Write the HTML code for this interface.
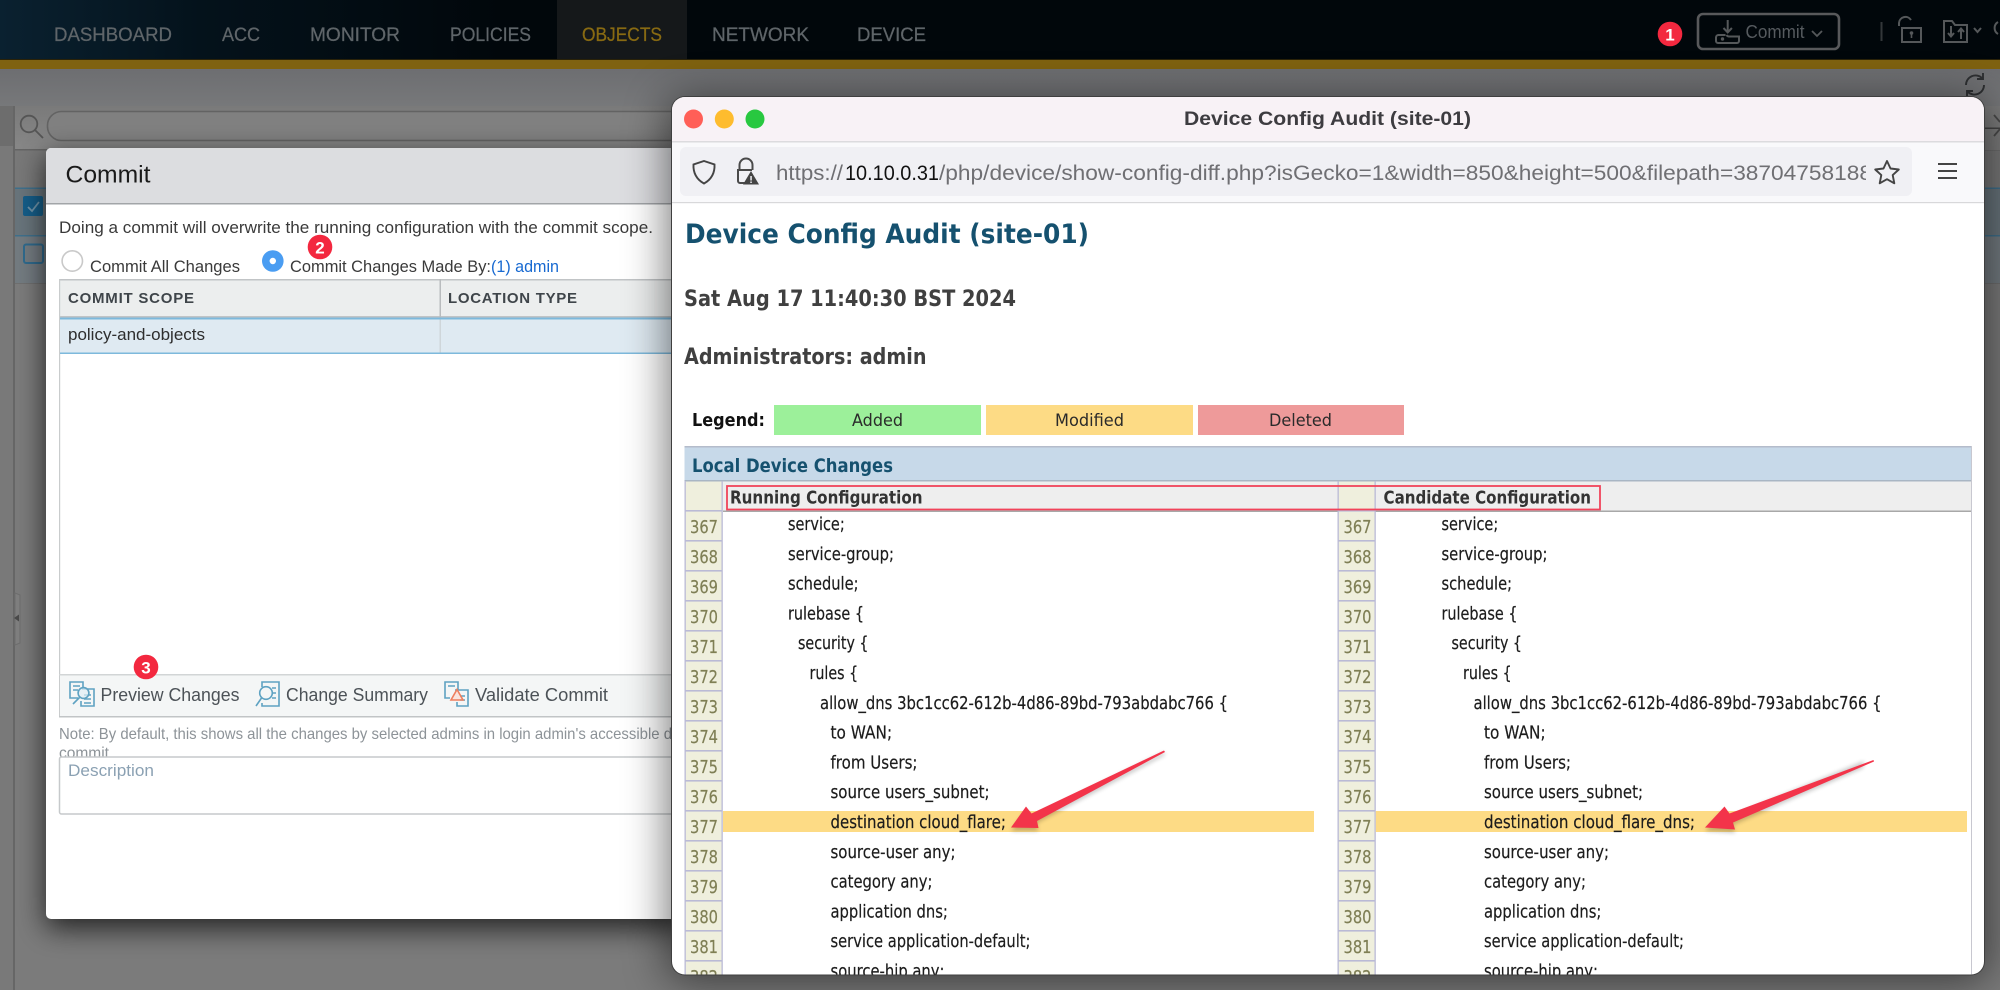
<!DOCTYPE html>
<html><head><meta charset="utf-8"><title>Device Config Audit</title>
<style>
html,body{margin:0;padding:0;background:#7a7a7a;width:2000px;height:990px;overflow:hidden}
svg{display:block;position:absolute;left:0;top:0}
text{font-family:"Liberation Sans",sans-serif;white-space:pre}
.d{font-family:"DejaVu Sans","Liberation Sans",sans-serif}
.c{font-family:"DejaVu Sans","Liberation Sans",sans-serif;font-size:17.5px;fill:#1c1c1c;stroke:#1c1c1c;stroke-width:.2px}
.n{font-family:"DejaVu Sans","Liberation Sans",sans-serif;font-size:18px;fill:#7f7f55;stroke:#7f7f55;stroke-width:.2px}
.nav{font-size:19.5px;fill:#5f6569;stroke:#5f6569;stroke-width:.25px}
.ic{fill:none;stroke:#5ea2c2;stroke-width:1.6}
.tk{fill:none;stroke:#55585a;stroke-width:2}
</style></head><body>
<svg width="2000" height="990" viewBox="0 0 2000 990" xmlns="http://www.w3.org/2000/svg">
<defs>
<linearGradient id="nv" x1="0" x2="1" y1="0" y2="0"><stop offset="0" stop-color="#0a2130"/><stop offset=".1" stop-color="#04121b"/><stop offset=".25" stop-color="#01070b"/><stop offset="1" stop-color="#01070b"/></linearGradient>
<linearGradient id="bd" x1="0" x2="0" y1="0" y2="1"><stop offset="0" stop-color="#6d6e71"/><stop offset="1" stop-color="#77787a"/></linearGradient>
<linearGradient id="sr" x1="0" x2="0" y1="0" y2="1"><stop offset="0" stop-color="#7a7a7a"/><stop offset="1" stop-color="#878787"/></linearGradient>
<filter id="b1" x="-20%" y="-20%" width="140%" height="140%"><feGaussianBlur stdDeviation="14"/></filter>
<filter id="b2" x="-20%" y="-20%" width="140%" height="140%"><feGaussianBlur stdDeviation="22"/></filter>
<filter id="b3" x="-20%" y="-60%" width="140%" height="220%"><feGaussianBlur stdDeviation="2"/></filter>
<pattern id="nc" x="0" y="510" width="10" height="30" patternUnits="userSpaceOnUse"><rect width="10" height="30" fill="#efefdd"/><rect width="10" height="1.6" fill="#babad6"/></pattern>
<clipPath id="win"><rect x="672" y="97" width="1312" height="877.5" rx="13"/></clipPath>
<clipPath id="url"><rect x="770" y="150" width="1096" height="44"/></clipPath>
<clipPath id="cmt"><rect x="50" y="740" width="100" height="17"/></clipPath>
</defs>

<!-- background app -->
<rect width="2000" height="990" fill="#7b7b7b"/>
<rect width="2000" height="60" fill="url(#nv)"/>
<rect x="557" y="0" width="130" height="59" fill="#15181a"/>
<rect y="59" width="2000" height="1" fill="#2a2208"/>
<rect y="60" width="2000" height="9" fill="#7f6210"/>
<rect y="69" width="2000" height="37" fill="url(#bd)"/>
<text class="nav" x="54" y="41" textLength="118" lengthAdjust="spacingAndGlyphs">DASHBOARD</text>
<text class="nav" x="222" y="41" textLength="38" lengthAdjust="spacingAndGlyphs">ACC</text>
<text class="nav" x="310" y="41" textLength="90" lengthAdjust="spacingAndGlyphs">MONITOR</text>
<text class="nav" x="450" y="41" textLength="81" lengthAdjust="spacingAndGlyphs">POLICIES</text>
<text class="nav" x="582" y="41" textLength="80" lengthAdjust="spacingAndGlyphs" style="fill:#886a12;stroke:#886a12">OBJECTS</text>
<text class="nav" x="712" y="41" textLength="97" lengthAdjust="spacingAndGlyphs">NETWORK</text>
<text class="nav" x="857" y="41" textLength="69" lengthAdjust="spacingAndGlyphs">DEVICE</text>

<!-- commit button & header icons -->
<circle cx="1670" cy="34" r="12.3" fill="#f3283f"/>
<text x="1670" y="40.5" text-anchor="middle" font-size="17" font-weight="700" fill="#fff">1</text>
<rect x="1698" y="14" width="141" height="35" rx="5" fill="none" stroke="#58595b" stroke-width="2.6"/>
<path class="tk" d="M1727.7 20V32M1723.5 28l4.2 4.4 4.2-4.4"/>
<path class="tk" d="M1718.5 35h7M1718.5 35a2.5 2.5 0 0 0-2.5 2.5v3.5a2 2 0 0 0 2 2h19a2 2 0 0 0 2-2v-4.5h-9.5a3 3 0 0 1-3-1.500"/>
<circle cx="1722.5" cy="39" r="1.7" fill="#55585a"/>
<text x="1745.5" y="38" font-size="18" fill="#565b5f" textLength="59" lengthAdjust="spacingAndGlyphs">Commit</text>
<path d="M1812 31l5 5 5-5" fill="none" stroke="#55585a" stroke-width="1.8"/>
<rect x="1880.5" y="22" width="2" height="19" fill="#33373a"/>
<path class="tk" d="M1902 28h19v14h-19zM1899 26v-3a6.5 6.5 0 0 1 12-3"/>
<circle cx="1911.5" cy="33" r="1.8" fill="#55585a"/><rect x="1910.7" y="33" width="1.6" height="5" fill="#55585a"/>
<path class="tk" d="M1944 21h8l3 4h12v17h-23zM1951 26v10M1948 33l3 3.5 3-3.5M1961 39V29M1958 32l3-3.5 3 3.5"/>
<path d="M1974 28l3.5 4 3.5-4" fill="none" stroke="#55585a" stroke-width="2"/>
<path d="M1998 22a7 7 0 0 0 0 12" fill="none" stroke="#55585a" stroke-width="2"/>
<path d="M1966 85a9.5 9.5 0 0 1 16-7M1984 85a9.5 9.5 0 0 1-16 7M1983 73v6h-6M1967 97v-6h6" fill="none" stroke="#2e3032" stroke-width="1.9"/>

<!-- grid background -->
<rect x="0" y="106" width="2000" height="44" fill="url(#sr)"/>
<rect x="0" y="106" width="13" height="40" fill="#6d6d6d"/>
<rect x="0" y="146" width="13" height="844" fill="#797979"/>
<rect x="13" y="106" width="2" height="884" fill="#666"/>
<circle cx="29" cy="124" r="8.3" fill="none" stroke="#555" stroke-width="1.8"/>
<path d="M35 130l8 8" stroke="#555" stroke-width="1.8"/>
<rect x="47.5" y="111.5" width="2000" height="29" rx="14" fill="#808080" stroke="#636363" stroke-width="1.6"/>
<rect x="15" y="150" width="1985" height="38" fill="#787878"/>
<rect x="15" y="149" width="1985" height="1.5" fill="#646464"/>
<rect x="15" y="188" width="1985" height="47" fill="#68747b"/>
<rect x="15" y="235" width="1985" height="48" fill="#737b80"/>
<rect x="15" y="187.5" width="1985" height="1.5" fill="#3f708c"/>
<rect x="15" y="235" width="1985" height="1.5" fill="#3f708c"/>
<rect x="15" y="283" width="1985" height="1" fill="#6f6f6f"/>
<rect x="23" y="196" width="20" height="20" rx="2" fill="#155d88"/>
<path d="M28 207l4 4 7-9" fill="none" stroke="#6f93a8" stroke-width="1.8"/>
<rect x="24" y="244.5" width="19" height="18.5" rx="2" fill="none" stroke="#2f6a8d" stroke-width="2"/>
<path d="M15 593l5 2v48l-5 2z" fill="#7f7f7f" stroke="#6e6e6e"/>
<path d="M14 618l5-3.5v7z" fill="#4a4a4a"/>
<rect x="1984" y="106" width="16" height="44" fill="#7c7c7c"/>
<path d="M1994 115l6 7M1994 136l6-7" stroke="#4a4a4a" stroke-width="1.8"/>
<rect x="1984" y="127.5" width="16" height="1.5" fill="#444"/>

<!-- dialog shadow -->
<rect x="46" y="156" width="640" height="772" rx="5" fill="#000" opacity=".72" filter="url(#b1)"/>

<!-- commit dialog -->
<rect x="46" y="148" width="660" height="771" rx="5" fill="#fff"/>
<path d="M46 203v-50a5 5 0 0 1 5-5h655v55z" fill="#dcdde0"/>
<rect x="46" y="203" width="660" height="1.5" fill="#a2a5a8"/>
<text x="65.5" y="182.5" font-size="24.5" fill="#1a1a1a" textLength="85" lengthAdjust="spacingAndGlyphs">Commit</text>
<text x="59" y="233" font-size="17" fill="#3a3a3a" textLength="594" lengthAdjust="spacingAndGlyphs">Doing a commit will overwrite the running configuration with the commit scope.</text>
<circle cx="72.3" cy="261" r="10.2" fill="#fff" stroke="#c9c9c9" stroke-width="1.6"/>
<text x="90" y="272" font-size="17" fill="#3a3a3a" textLength="150" lengthAdjust="spacingAndGlyphs">Commit All Changes</text>
<circle cx="272.8" cy="261" r="10.8" fill="#4a9df2"/><circle cx="272.8" cy="261" r="3.2" fill="#fff"/>
<text x="290" y="272" font-size="17" fill="#3a3a3a" textLength="201" lengthAdjust="spacingAndGlyphs">Commit Changes Made By:</text>
<text x="491" y="272" font-size="17" fill="#1769d1" textLength="68" lengthAdjust="spacingAndGlyphs">(1) admin</text>
<circle cx="320" cy="247" r="12.3" fill="#f3283f"/>
<text x="320" y="253.5" text-anchor="middle" font-size="17" font-weight="700" fill="#fff">2</text>

<rect x="59" y="279" width="640" height="38" fill="#eceeee"/>
<rect x="59" y="279" width="640" height="1.5" fill="#c1c4c6"/>
<rect x="59" y="316" width="640" height="1.5" fill="#c1c4c6"/>
<rect x="439.5" y="279" width="1.5" height="74" fill="#b9bcbe"/>
<rect x="59" y="279" width="1.2" height="438" fill="#c9cccd"/>
<text x="68" y="303" font-size="15" font-weight="700" fill="#3f454a" textLength="126" lengthAdjust="spacing">COMMIT SCOPE</text>
<text x="448" y="303" font-size="15" font-weight="700" fill="#3f454a" textLength="129" lengthAdjust="spacing">LOCATION TYPE</text>
<rect x="60" y="318" width="640" height="35" fill="#dfeaf2"/>
<rect x="439.5" y="318" width="1.5" height="35" fill="#cfd6da"/>
<rect x="60" y="317.5" width="640" height="2" fill="#7db9dc"/>
<rect x="60" y="352.5" width="640" height="1.5" fill="#7db9dc"/>
<text x="68" y="340" font-size="16.5" fill="#2e2e2e" textLength="137" lengthAdjust="spacingAndGlyphs">policy-and-objects</text>

<rect x="60" y="674" width="640" height="43" fill="#f4f6f6"/>
<rect x="59" y="674" width="640" height="1.5" fill="#d2d5d6"/>
<rect x="59" y="716" width="640" height="1.5" fill="#c1c4c6"/>
<path class="ic" d="M83 689v-7H70v16h8M82 689h12v17H81v-5M84 695h7M84 699h7M84 703h7M73 686h7M73 690h5"/>
<circle cx="83.5" cy="693" r="5.4" fill="#dfeef5" fill-opacity=".7" stroke="#5ea2c2" stroke-width="1.6"/>
<path class="ic" d="M79.5 697.5L73 704"/>
<path class="ic" d="M262 687v-5h17v24h-17v-3M272 688h4M272 693h4M272 698h4"/>
<circle cx="266" cy="693" r="6.3" fill="none" stroke="#5ea2c2" stroke-width="1.6"/>
<path class="ic" d="M261.5 698L256 706"/>
<path class="ic" d="M458 690v-8h-13v16h5M455 690h13v16h-11v-4M460 696h5M460 700h5M448 686h7"/>
<path d="M457 689.5l6 10.5h-12z" fill="#fbd9cd" fill-opacity=".6" stroke="#ee7f5e" stroke-width="1.6"/>
<text x="100.5" y="701" font-size="18" fill="#4c5257" textLength="139" lengthAdjust="spacingAndGlyphs">Preview Changes</text>
<text x="286" y="701" font-size="18" fill="#4c5257" textLength="142" lengthAdjust="spacingAndGlyphs">Change Summary</text>
<text x="475" y="701" font-size="18" fill="#4c5257" textLength="133" lengthAdjust="spacingAndGlyphs">Validate Commit</text>
<circle cx="146" cy="667" r="12.3" fill="#f3283f"/>
<text x="146" y="673.5" text-anchor="middle" font-size="17" font-weight="700" fill="#fff">3</text>

<text x="59" y="739" font-size="16" fill="#8d9398" textLength="613" lengthAdjust="spacingAndGlyphs">Note: By default, this shows all the changes by selected admins in login admin's accessible d</text>
<text x="59" y="758" font-size="16" fill="#8d9398" textLength="50" lengthAdjust="spacingAndGlyphs" clip-path="url(#cmt)">commit</text>
<rect x="59.5" y="757" width="640" height="57" rx="2" fill="#fff" stroke="#c6c9cb" stroke-width="1.5"/>
<text x="68" y="776" font-size="17" fill="#8ba1b3" textLength="86" lengthAdjust="spacingAndGlyphs">Description</text>

<!-- browser shadow -->
<rect x="668" y="100" width="1320" height="880" rx="14" fill="#000" opacity=".55" filter="url(#b2)"/>

<!-- browser window -->
<rect x="671" y="96" width="1314" height="879.5" rx="14" fill="#3f3f3f"/>
<g clip-path="url(#win)">
<rect x="672" y="97" width="1312" height="878" fill="#fff"/>
<rect x="672" y="97" width="1312" height="44" fill="#f8f2f6"/>
<rect x="672" y="141" width="1312" height="1.5" fill="#dcdbde"/>
<rect x="672" y="142.5" width="1312" height="60" fill="#f9f9fb"/>
<rect x="672" y="202" width="1312" height="1.2" fill="#d8d8da"/>
<circle cx="693.5" cy="119" r="9.5" fill="#ff5f57"/>
<circle cx="724.3" cy="119" r="9.5" fill="#febc2e"/>
<circle cx="755" cy="119" r="9.5" fill="#28c840"/>
<text x="1184" y="125" font-size="19" font-weight="700" fill="#3d3c40" textLength="287" lengthAdjust="spacingAndGlyphs">Device Config Audit (site-01)</text>
<rect x="680" y="147" width="1232" height="49" rx="6" fill="#f0f0f4"/>
<path d="M704 161l10.5 3.5c.5 8-3 15-10.5 19-7.500-4-11-11-10.500-19z" fill="none" stroke="#444" stroke-width="1.9"/>
<path d="M739.5 170v-5a6.5 6.5 0 0 1 13 0v5M744 170h-6v11a2 2 0 0 0 2 2h5" fill="none" stroke="#4a4a4a" stroke-width="2"/>
<path d="M738 170h14" stroke="#4a4a4a" stroke-width="2"/>
<path d="M751 171l8 13.5h-16z" fill="#444"/>
<rect x="750.3" y="176" width="1.5" height="4.5" fill="#f0f0f4"/><rect x="750.3" y="181.5" width="1.5" height="1.5" fill="#f0f0f4"/>
<text x="776" y="180" font-size="21" fill="#6f6f73" textLength="67" lengthAdjust="spacingAndGlyphs">https://</text>
<text x="845" y="180" font-size="21" fill="#111" textLength="94" lengthAdjust="spacingAndGlyphs">10.10.0.31</text>
<text x="939" y="180" font-size="21" fill="#6f6f73" textLength="933" lengthAdjust="spacingAndGlyphs" clip-path="url(#url)">/php/device/show-config-diff.php?isGecko=1&amp;width=850&amp;height=500&amp;filepath=38704758188</text>
<path d="M1887 161l3.5 7.5 8.3 1-6.1 5.6 1.6 8.2-7.3-4.1-7.3 4.1 1.6-8.2-6.1-5.6 8.3-1z" fill="none" stroke="#444" stroke-width="1.9" stroke-linejoin="round"/>
<path d="M1938 164h19M1938 171h19M1938 178h19" stroke="#444" stroke-width="2"/>

<text class="d" x="685" y="243" font-size="27" font-weight="700" fill="#15516f" textLength="404" lengthAdjust="spacingAndGlyphs">Device Config Audit (site-01)</text>
<text class="d" x="684" y="306" font-size="22" font-weight="700" fill="#404040" textLength="332" lengthAdjust="spacingAndGlyphs">Sat Aug 17 11:40:30 BST 2024</text>
<text class="d" x="684" y="364" font-size="22" font-weight="700" fill="#404040" textLength="242.5" lengthAdjust="spacingAndGlyphs">Administrators: admin</text>
<text class="d" x="692" y="426" font-size="17.5" font-weight="700" fill="#111" textLength="73" lengthAdjust="spacingAndGlyphs">Legend:</text>
<rect x="774" y="405" width="207" height="30" fill="#9cf09a"/>
<rect x="986" y="405" width="207" height="30" fill="#fddb85"/>
<rect x="1198" y="405" width="206" height="30" fill="#ee9a9a"/>
<text class="d" x="852" y="426" font-size="17" fill="#2a2a2a" textLength="51" lengthAdjust="spacingAndGlyphs">Added</text>
<text class="d" x="1055" y="426" font-size="17" fill="#2a2a2a" textLength="69" lengthAdjust="spacingAndGlyphs">Modified</text>
<text class="d" x="1269" y="426" font-size="17" fill="#2a2a2a" textLength="63" lengthAdjust="spacingAndGlyphs">Deleted</text>

<!-- diff table -->
<rect x="684.5" y="446" width="1287" height="35" fill="#c7d9e9"/>
<rect x="684.5" y="446" width="1287" height="1.5" fill="#b4bccb"/>
<rect x="684.5" y="481" width="1287" height="30" fill="#eeeeee"/>
<rect x="684.5" y="480" width="1287" height="1.5" fill="#a9b6c4"/>
<rect x="723" y="510.5" width="1248.5" height="1.5" fill="#a8a8a8"/>
<rect x="1971" y="446" width="1" height="530" fill="#c8c8d0"/>
<text class="d" x="692" y="472" font-size="19" font-weight="700" fill="#15516f" textLength="201" lengthAdjust="spacingAndGlyphs">Local Device Changes</text>

<rect x="685" y="481.5" width="37" height="29" fill="#efefdd"/>
<rect x="1338" y="481.5" width="37" height="29" fill="#efefdd"/>
<rect x="685" y="510" width="37" height="470" fill="url(#nc)"/>
<rect x="1338" y="510" width="37" height="470" fill="url(#nc)"/>
<rect x="684.5" y="481" width="1.3" height="500" fill="#babad6"/>
<rect x="721.5" y="481" width="1.3" height="500" fill="#babad6"/>
<rect x="1337.5" y="481" width="1.3" height="500" fill="#babad6"/>
<rect x="1374.5" y="481" width="1.3" height="500" fill="#babad6"/>

<text class="d" x="730" y="503.5" font-size="17.5" font-weight="700" fill="#333" textLength="192.5" lengthAdjust="spacingAndGlyphs">Running Configuration</text>
<text class="d" x="1383.5" y="503.5" font-size="17.5" font-weight="700" fill="#333" textLength="207.5" lengthAdjust="spacingAndGlyphs">Candidate Configuration</text>
<rect x="727" y="486" width="873" height="23.5" fill="none" stroke="#f1435a" stroke-width="1.8"/>

<rect x="723" y="811" width="591" height="21" fill="#fddb85"/>
<rect x="1375.8" y="811" width="591.2" height="21" fill="#fddb85"/>

<text class="n" x="690" y="533" textLength="28" lengthAdjust="spacingAndGlyphs">367</text><text class="n" x="1343.5" y="533" textLength="28" lengthAdjust="spacingAndGlyphs">367</text>
<text class="n" x="690" y="563" textLength="28" lengthAdjust="spacingAndGlyphs">368</text><text class="n" x="1343.5" y="563" textLength="28" lengthAdjust="spacingAndGlyphs">368</text>
<text class="n" x="690" y="593" textLength="28" lengthAdjust="spacingAndGlyphs">369</text><text class="n" x="1343.5" y="593" textLength="28" lengthAdjust="spacingAndGlyphs">369</text>
<text class="n" x="690" y="623" textLength="28" lengthAdjust="spacingAndGlyphs">370</text><text class="n" x="1343.5" y="623" textLength="28" lengthAdjust="spacingAndGlyphs">370</text>
<text class="n" x="690" y="653" textLength="28" lengthAdjust="spacingAndGlyphs">371</text><text class="n" x="1343.5" y="653" textLength="28" lengthAdjust="spacingAndGlyphs">371</text>
<text class="n" x="690" y="683" textLength="28" lengthAdjust="spacingAndGlyphs">372</text><text class="n" x="1343.5" y="683" textLength="28" lengthAdjust="spacingAndGlyphs">372</text>
<text class="n" x="690" y="713" textLength="28" lengthAdjust="spacingAndGlyphs">373</text><text class="n" x="1343.5" y="713" textLength="28" lengthAdjust="spacingAndGlyphs">373</text>
<text class="n" x="690" y="743" textLength="28" lengthAdjust="spacingAndGlyphs">374</text><text class="n" x="1343.5" y="743" textLength="28" lengthAdjust="spacingAndGlyphs">374</text>
<text class="n" x="690" y="773" textLength="28" lengthAdjust="spacingAndGlyphs">375</text><text class="n" x="1343.5" y="773" textLength="28" lengthAdjust="spacingAndGlyphs">375</text>
<text class="n" x="690" y="803" textLength="28" lengthAdjust="spacingAndGlyphs">376</text><text class="n" x="1343.5" y="803" textLength="28" lengthAdjust="spacingAndGlyphs">376</text>
<text class="n" x="690" y="833" textLength="28" lengthAdjust="spacingAndGlyphs">377</text><text class="n" x="1343.5" y="833" textLength="28" lengthAdjust="spacingAndGlyphs">377</text>
<text class="n" x="690" y="863" textLength="28" lengthAdjust="spacingAndGlyphs">378</text><text class="n" x="1343.5" y="863" textLength="28" lengthAdjust="spacingAndGlyphs">378</text>
<text class="n" x="690" y="893" textLength="28" lengthAdjust="spacingAndGlyphs">379</text><text class="n" x="1343.5" y="893" textLength="28" lengthAdjust="spacingAndGlyphs">379</text>
<text class="n" x="690" y="923" textLength="28" lengthAdjust="spacingAndGlyphs">380</text><text class="n" x="1343.5" y="923" textLength="28" lengthAdjust="spacingAndGlyphs">380</text>
<text class="n" x="690" y="953" textLength="28" lengthAdjust="spacingAndGlyphs">381</text><text class="n" x="1343.5" y="953" textLength="28" lengthAdjust="spacingAndGlyphs">381</text>
<text class="n" x="690" y="983" textLength="28" lengthAdjust="spacingAndGlyphs">382</text><text class="n" x="1343.5" y="983" textLength="28" lengthAdjust="spacingAndGlyphs">382</text>

<text class="c" x="788" y="530" textLength="56.7" lengthAdjust="spacingAndGlyphs">service;</text>
<text class="c" x="788" y="559.8" textLength="106" lengthAdjust="spacingAndGlyphs">service-group;</text>
<text class="c" x="788" y="589.6" textLength="70.5" lengthAdjust="spacingAndGlyphs">schedule;</text>
<text class="c" x="788" y="619.4" textLength="76" lengthAdjust="spacingAndGlyphs">rulebase {</text>
<text class="c" x="798" y="649.2" textLength="70.5" lengthAdjust="spacingAndGlyphs">security {</text>
<text class="c" x="809.5" y="679" textLength="48.7" lengthAdjust="spacingAndGlyphs">rules {</text>
<text class="c" x="820" y="708.8" textLength="408" lengthAdjust="spacingAndGlyphs">allow_dns 3bc1cc62-612b-4d86-89bd-793abdabc766 {</text>
<text class="c" x="830.5" y="738.6" textLength="61.6" lengthAdjust="spacingAndGlyphs">to WAN;</text>
<text class="c" x="830.5" y="768.4" textLength="87" lengthAdjust="spacingAndGlyphs">from Users;</text>
<text class="c" x="830.5" y="798.2" textLength="159" lengthAdjust="spacingAndGlyphs">source users_subnet;</text>
<text class="c" x="830.5" y="828" textLength="175.4" lengthAdjust="spacingAndGlyphs">destination cloud_flare;</text>
<text class="c" x="830.5" y="857.8" textLength="125" lengthAdjust="spacingAndGlyphs">source-user any;</text>
<text class="c" x="830.5" y="887.6" textLength="102" lengthAdjust="spacingAndGlyphs">category any;</text>
<text class="c" x="830.5" y="917.4" textLength="117.4" lengthAdjust="spacingAndGlyphs">application dns;</text>
<text class="c" x="830.5" y="947.2" textLength="200" lengthAdjust="spacingAndGlyphs">service application-default;</text>
<text class="c" x="830.5" y="977" textLength="114" lengthAdjust="spacingAndGlyphs">source-hip any;</text>

<text class="c" x="1441.5" y="530" textLength="56.7" lengthAdjust="spacingAndGlyphs">service;</text>
<text class="c" x="1441.5" y="559.8" textLength="106" lengthAdjust="spacingAndGlyphs">service-group;</text>
<text class="c" x="1441.5" y="589.6" textLength="70.5" lengthAdjust="spacingAndGlyphs">schedule;</text>
<text class="c" x="1441.5" y="619.4" textLength="76" lengthAdjust="spacingAndGlyphs">rulebase {</text>
<text class="c" x="1451.5" y="649.2" textLength="70.5" lengthAdjust="spacingAndGlyphs">security {</text>
<text class="c" x="1463" y="679" textLength="48.7" lengthAdjust="spacingAndGlyphs">rules {</text>
<text class="c" x="1473.5" y="708.8" textLength="408" lengthAdjust="spacingAndGlyphs">allow_dns 3bc1cc62-612b-4d86-89bd-793abdabc766 {</text>
<text class="c" x="1484" y="738.6" textLength="61.6" lengthAdjust="spacingAndGlyphs">to WAN;</text>
<text class="c" x="1484" y="768.4" textLength="87" lengthAdjust="spacingAndGlyphs">from Users;</text>
<text class="c" x="1484" y="798.2" textLength="159" lengthAdjust="spacingAndGlyphs">source users_subnet;</text>
<text class="c" x="1484" y="828" textLength="211" lengthAdjust="spacingAndGlyphs">destination cloud_flare_dns;</text>
<text class="c" x="1484" y="857.8" textLength="125" lengthAdjust="spacingAndGlyphs">source-user any;</text>
<text class="c" x="1484" y="887.6" textLength="102" lengthAdjust="spacingAndGlyphs">category any;</text>
<text class="c" x="1484" y="917.4" textLength="117.4" lengthAdjust="spacingAndGlyphs">application dns;</text>
<text class="c" x="1484" y="947.2" textLength="200" lengthAdjust="spacingAndGlyphs">service application-default;</text>
<text class="c" x="1484" y="977" textLength="114" lengthAdjust="spacingAndGlyphs">source-hip any;</text>

<!-- arrows -->
<path d="M1165 752l-128 68 1 8-27 0 15-21 6 7 132-65z" fill="#000" opacity=".22" filter="url(#b3)" transform="translate(0 3)"/>
<path d="M1863 765l-130 57 2 8-30-2 19-21 5 7 135-56z" fill="#000" opacity=".22" filter="url(#b3)" transform="translate(0 3)"/>
<path d="M1164 750.5l1 1.5-128 69 1.5 7-27.5-.5 15-21 5.5 7z" fill="#f3344a"/>
<path d="M1873.5 760l.5 1.5-141 61 2 7-30-2 19.5-21 5 7z" fill="#f3344a"/>
</g>
</svg>
</body></html>
